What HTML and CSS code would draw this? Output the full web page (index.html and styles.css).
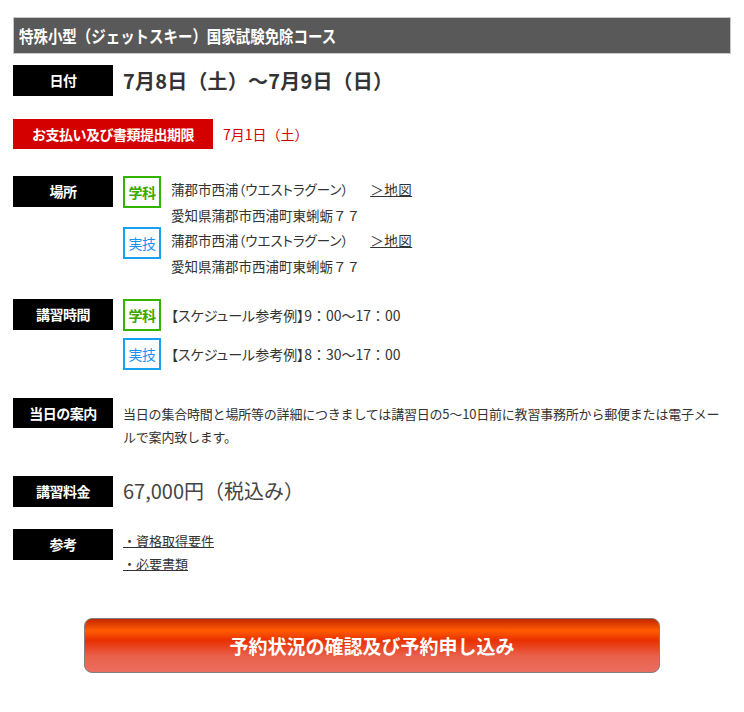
FILE: index.html
```html
<!DOCTYPE html>
<html lang="ja">
<head>
    <meta charset="UTF-8">
    <meta name="viewport" content="width=device-width, initial-scale=1.0">
    <title>特殊小型（ジェットスキー）国家試験免除コース</title>
    <link rel="stylesheet" href="styles.css">
</head>
<body>
    <div class="course">
        <h2 class="course-title"><span>特殊小型（ジェットスキー）国家試験免除コース</span></h2>

        <div class="row row-date">
            <div class="label">日付</div>
            <div class="date">7月8日（土）～7月9日（日）</div>
        </div>

        <div class="row row-deadline">
            <div class="label label-red">お支払い及び書類提出期限</div>
            <div class="deadline">7月1日（土）</div>
        </div>

        <div class="row row-place">
            <div class="label">場所</div>
            <div class="items">
                <div class="item">
                    <span class="badge badge-green">学科</span>
                    <div class="place">
                        <p class="place-name">蒲郡市西浦（ウエストラグーン）<a href="#" class="map-link">＞地図</a></p>
                        <p>愛知県蒲郡市西浦町東蜊蛎７７</p>
                    </div>
                </div>
                <div class="item">
                    <span class="badge badge-blue">実技</span>
                    <div class="place">
                        <p class="place-name">蒲郡市西浦（ウエストラグーン）<a href="#" class="map-link">＞地図</a></p>
                        <p>愛知県蒲郡市西浦町東蜊蛎７７</p>
                    </div>
                </div>
            </div>
        </div>

        <div class="row row-time">
            <div class="label">講習時間</div>
            <div class="items schedule">
                <div class="item">
                    <span class="badge badge-green">学科</span>
                    <p><span class="note">【スケジュール参考例】</span>9：00～17：00</p>
                </div>
                <div class="item">
                    <span class="badge badge-blue">実技</span>
                    <p><span class="note">【スケジュール参考例】</span>8：30～17：00</p>
                </div>
            </div>
        </div>

        <div class="row row-info">
            <div class="label">当日の案内</div>
            <p class="info">当日の集合時間と場所等の詳細につきましては講習日の5～10日前に教習事務所から郵便または電子メールで案内致します。</p>
        </div>

        <div class="row row-fee">
            <div class="label">講習料金</div>
            <div class="fee">67,000円（税込み）</div>
        </div>

        <div class="row row-ref">
            <div class="label">参考</div>
            <div class="links">
                <a href="#">・資格取得要件</a>
                <a href="#">・必要書類</a>
            </div>
        </div>

        <div class="apply">
            <a href="#" class="apply-btn">予約状況の確認及び予約申し込み</a>
        </div>
    </div>
</body>
</html>
```

FILE: styles.css
```css
body {
    font-family: "Noto Sans CJK JP", "Noto Sans", sans-serif;
    margin: 0;
    padding: 17px 13px 0;
    color: #333;
    background-color: #fff;
}
p {
    margin: 0;
}
a {
    color: #333;
}
.course-title {
    margin: 0;
    height: 35px;
    line-height: 35px;
    background-color: #595959;
    border: 1px solid #c8c8c8;
    color: #fff;
    font-size: 17px;
    font-weight: bold;
    padding-left: 5px;
    overflow: hidden;
    white-space: nowrap;
}
.course-title span {
    display: inline-block;
    transform: scaleX(0.85);
    transform-origin: left center;
}
.row {
    display: flex;
    gap: 10px;
    align-items: flex-start;
}
.label {
    flex: 0 0 100px;
    height: 31px;
    line-height: 31px;
    background-color: #000;
    color: #fff;
    font-size: 14px;
    font-weight: bold;
    text-align: center;
    letter-spacing: -0.5px;
}
.label-red {
    flex-basis: 200px;
    height: 30px;
    line-height: 30px;
    background-color: #d40000;
}
.row-date {
    margin-top: 11px;
}
.date {
    font-size: 20px;
    font-weight: bold;
    line-height: 31px;
    letter-spacing: 0.2px;
}
.row-deadline {
    margin-top: 23px;
}
.deadline {
    color: #d40000;
    font-size: 14px;
    line-height: 30px;
}
.row-place {
    margin-top: 27px;
}
.items {
    display: flex;
    flex-direction: column;
}
.item {
    display: flex;
    gap: 10px;
    align-items: flex-start;
}
.item + .item {
    margin-top: -1px;
}
.badge {
    box-sizing: border-box;
    width: 38px;
    height: 32px;
    line-height: 28px;
    text-align: center;
    font-size: 14px;
    font-weight: bold;
    border: 2px solid;
    letter-spacing: -0.5px;
}
.badge-green {
    color: #3aa800;
    border-color: #33b400;
}
.badge-blue {
    color: #1f8ff0;
    border-color: #16a0f0;
    font-weight: normal;
}
.place p {
    font-size: 13.5px;
    line-height: 26px;
}
.place .place-name {
    font-feature-settings: "palt";
}
.map-link {
    margin-left: 22px;
    letter-spacing: 0.5px;
}
.row-time {
    margin-top: 20px;
}
.schedule .item + .item {
    margin-top: 7px;
}
.schedule p {
    font-size: 14px;
    line-height: 32px;
}
.note {
    font-feature-settings: "palt";
}
.row-info {
    margin-top: 28px;
}
.row-info .label {
    height: 30px;
    line-height: 30px;
}
.info {
    flex: 1;
    font-size: 13px;
    line-height: 23px;
    padding-top: 4px;
    letter-spacing: -0.2px;
}
.row-fee {
    margin-top: 28px;
}
.fee {
    font-size: 20px;
    line-height: 30px;
    color: #444;
}
.row-ref {
    margin-top: 22px;
}
.links {
    display: flex;
    flex-direction: column;
    font-size: 13px;
    line-height: 23px;
}
.apply {
    margin-top: 43px;
    display: flex;
    justify-content: center;
}
.apply-btn {
    box-sizing: border-box;
    display: block;
    width: 576px;
    height: 55px;
    line-height: 53px;
    border: 1px solid #808080;
    border-radius: 8px;
    background: linear-gradient(to bottom, #c42800 0%, #ff5c00 22%, #e83000 40%, #e9604c 70%, #eb6e5e 100%);
    color: #fff;
    font-size: 19px;
    font-weight: bold;
    text-align: center;
    text-decoration: none;
}
```
